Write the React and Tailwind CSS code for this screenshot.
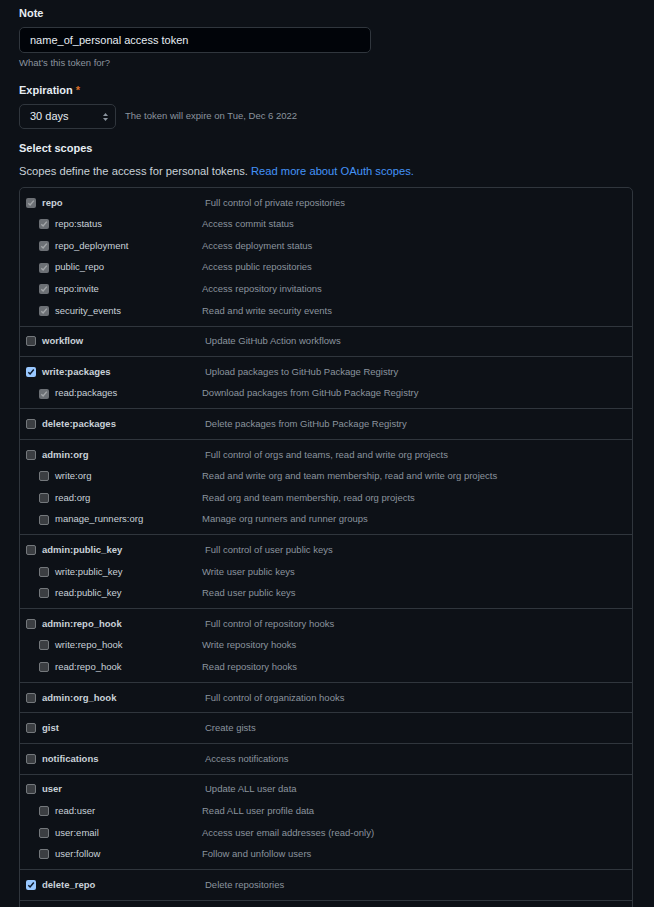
import React from "react";

const groups = [
  { name: "repo", desc: "Full control of private repositories", state: "disabled", children: [
    ["repo:status", "Access commit status"],
    ["repo_deployment", "Access deployment status"],
    ["public_repo", "Access public repositories"],
    ["repo:invite", "Access repository invitations"],
    ["security_events", "Read and write security events"],
  ], childState: "disabled" },
  { name: "workflow", desc: "Update GitHub Action workflows", state: "off", children: [] },
  { name: "write:packages", desc: "Upload packages to GitHub Package Registry", state: "checked", children: [
    ["read:packages", "Download packages from GitHub Package Registry"],
  ], childState: "disabled" },
  { name: "delete:packages", desc: "Delete packages from GitHub Package Registry", state: "off", children: [] },
  { name: "admin:org", desc: "Full control of orgs and teams, read and write org projects", state: "off", children: [
    ["write:org", "Read and write org and team membership, read and write org projects"],
    ["read:org", "Read org and team membership, read org projects"],
    ["manage_runners:org", "Manage org runners and runner groups"],
  ], childState: "off" },
  { name: "admin:public_key", desc: "Full control of user public keys", state: "off", children: [
    ["write:public_key", "Write user public keys"],
    ["read:public_key", "Read user public keys"],
  ], childState: "off" },
  { name: "admin:repo_hook", desc: "Full control of repository hooks", state: "off", children: [
    ["write:repo_hook", "Write repository hooks"],
    ["read:repo_hook", "Read repository hooks"],
  ], childState: "off" },
  { name: "admin:org_hook", desc: "Full control of organization hooks", state: "off", children: [] },
  { name: "gist", desc: "Create gists", state: "off", children: [] },
  { name: "notifications", desc: "Access notifications", state: "off", children: [] },
  { name: "user", desc: "Update ALL user data", state: "off", children: [
    ["read:user", "Read ALL user profile data"],
    ["user:email", "Access user email addresses (read-only)"],
    ["user:follow", "Follow and unfollow users"],
  ], childState: "off" },
  { name: "delete_repo", desc: "Delete repositories", state: "checked", children: [] },
  { name: "write:discussion", desc: "Read and write team discussions", state: "off", children: [
    ["read:discussion", "Read team discussions"],
  ], childState: "off" },
];

function Check({ kind }) {
  if (kind === "checked") {
    return (
      <span className="flex h-[10px] w-[10px] shrink-0 items-center justify-center rounded-[2px] bg-[#99c8ff]">
        <svg width="8" height="8" viewBox="0 0 8 8">
          <path d="M1.3 4.2 L3.1 6 L6.8 1.6" fill="none" stroke="#0d1a2b" strokeWidth="1.5" />
        </svg>
      </span>
    );
  }
  if (kind === "disabled") {
    return (
      <span className="flex h-[10px] w-[10px] shrink-0 items-center justify-center rounded-[2px] bg-[#6c7075]">
        <svg width="8" height="8" viewBox="0 0 8 8">
          <path d="M1.3 4.2 L3.1 6 L6.8 1.6" fill="none" stroke="#a3a6a9" strokeWidth="1.4" />
        </svg>
      </span>
    );
  }
  return (
    <span className="block h-[10px] w-[10px] shrink-0 rounded-[2px] border border-[#74787c] bg-[#3b3e42]" />
  );
}

function Row({ name, desc, kind, child }) {
  return (
    <div className={`flex h-[21.6px] items-center ${child ? "pl-[19px]" : "pl-[6px]"}`}>
      <div className={`flex items-center gap-[6px] ${child ? "w-[163px]" : "w-[179px]"}`}>
        <Check kind={kind} />
        <span className={child ? "text-[#c9d1d9]" : "font-bold text-[#c9d1d9]"}>{name}</span>
      </div>
      <span className="text-[#8b949e]">{desc}</span>
    </div>
  );
}

export default function App() {
  return (
    <div
      className="min-h-screen bg-[#0d1117] pl-[19px] pr-[21px] pt-[5px] text-[#c9d1d9]"
      style={{ fontFamily: '"Liberation Sans", Arial, sans-serif' }}
    >
      <div className="text-[11px] font-bold leading-[16px] text-[#e6edf3]">Note</div>
      <div className="mt-[6px] flex h-[26px] w-[352px] items-center rounded-[5px] border border-[#30363d] bg-[#010409] px-[10px] text-[11px] text-[#e6edf3]">
        name_of_personal access token
      </div>
      <div className="mt-[2.5px] text-[9.5px] leading-[13px] text-[#8b949e]">What's this token for?</div>

      <div className="mt-[13.5px] text-[11px] font-bold leading-[16px] text-[#e6edf3]">
        Expiration <span className="text-[#db6d28]">*</span>
      </div>
      <div className="mt-[6px] flex items-center gap-[9px]">
        <div className="flex h-[25px] w-[97px] items-center justify-between rounded-[5px] border border-[#30363d] bg-[#0d1117] pl-[10px] pr-[6px] text-[11px] text-[#e6edf3]">
          <span>30 days</span>
          <svg width="7" height="10" viewBox="0 0 7 10">
            <path d="M3.5 1 L6 4 L1 4 Z" fill="#8b949e" />
            <path d="M3.5 9 L6 6 L1 6 Z" fill="#8b949e" />
          </svg>
        </div>
        <span className="text-[9.5px] text-[#8b949e]">The token will expire on Tue, Dec 6 2022</span>
      </div>

      <div className="mt-[11px] text-[11px] font-bold leading-[16px] text-[#e6edf3]">Select scopes</div>
      <div className="mt-[6.5px] text-[11.2px] leading-[16px] text-[#c9d1d9]">
        Scopes define the access for personal tokens.{" "}
        <span className="text-[#4493f8]">Read more about OAuth scopes.</span>
      </div>

      <div className="mt-[8.5px] rounded-[5px] border border-[#30363d] text-[9.5px]">
        {groups.map((g, i) => (
          <div key={g.name} className={`py-[4px] ${i > 0 ? "border-t border-[#30363d]" : ""}`}>
            <Row name={g.name} desc={g.desc} kind={g.state} />
            {g.children.map(([n, d]) => (
              <Row key={n} name={n} desc={d} kind={g.childState} child />
            ))}
          </div>
        ))}
      </div>
    </div>
  );
}
